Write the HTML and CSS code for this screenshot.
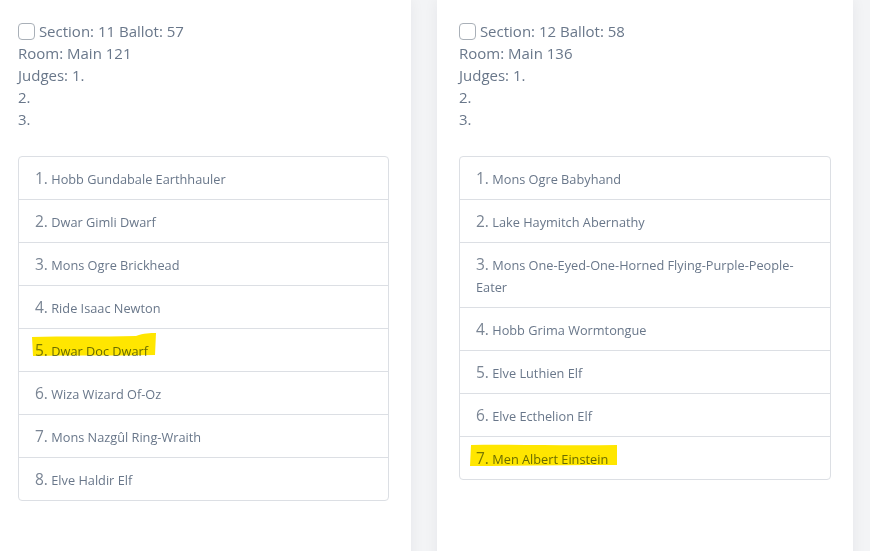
FILE: index.html
```html
<!DOCTYPE html>
<html>
<head>
<meta charset="utf-8">
<link rel="stylesheet" href="styles.css">
</head>
<body>
<div class="row">
  <div class="card">
    <div class="info">
      <div><span class="check"></span> Section: 11 Ballot: 57</div>
      <div>Room: Main 121</div>
      <div>Judges: 1.</div>
      <div>2.</div>
      <div>3.</div>
    </div>
    <ul class="list">
      <li><span class="num">1.</span> <span class="name">Hobb Gundabale Earthhauler</span></li>
      <li><span class="num">2.</span> <span class="name">Dwar Gimli Dwarf</span></li>
      <li><span class="num">3.</span> <span class="name">Mons Ogre Brickhead</span></li>
      <li><span class="num">4.</span> <span class="name">Ride Isaac Newton</span></li>
      <li class="marked"><span class="num">5.</span> <span class="name">Dwar Doc Dwarf</span><svg class="hl hl-a" width="124" height="24" viewBox="0 0 124 24"><path d="M0 4 C30 3 70 4 104 3 C112 0 118 0 124 0 L123 22 C80 23 40 22 1 23 Z" /></svg></li>
      <li><span class="num">6.</span> <span class="name">Wiza Wizard Of-Oz</span></li>
      <li><span class="num">7.</span> <span class="name">Mons Nazgûl Ring-Wraith</span></li>
      <li><span class="num">8.</span> <span class="name">Elve Haldir Elf</span></li>
    </ul>
  </div>
  <div class="card">
    <div class="info">
      <div><span class="check"></span> Section: 12 Ballot: 58</div>
      <div>Room: Main 136</div>
      <div>Judges: 1.</div>
      <div>2.</div>
      <div>3.</div>
    </div>
    <ul class="list">
      <li><span class="num">1.</span> <span class="name">Mons Ogre Babyhand</span></li>
      <li><span class="num">2.</span> <span class="name">Lake Haymitch Abernathy</span></li>
      <li><span class="num">3.</span> <span class="name">Mons One-Eyed-One-Horned Flying-Purple-People-Eater</span></li>
      <li><span class="num">4.</span> <span class="name">Hobb Grima Wormtongue</span></li>
      <li><span class="num">5.</span> <span class="name">Elve Luthien Elf</span></li>
      <li><span class="num">6.</span> <span class="name">Elve Ecthelion Elf</span></li>
      <li class="marked"><span class="num">7.</span> <span class="name">Men Albert Einstein</span><svg class="hl hl-b" width="148" height="23" viewBox="0 0 148 23"><path d="M1 1 C40 0 90 2 147 1 L147 21 C100 21 50 22 0 22 Z" /></svg></li>
    </ul>
  </div>
</div>
</body>
</html>
```

FILE: styles.css
```css
* { box-sizing: border-box; }
html, body {
  margin: 0;
  padding: 0;
  background: #f3f4f6;
  overflow: hidden;
}
body {
  font-family: "Open Sans", "Liberation Sans", sans-serif;
  color: #69778a;
  width: 870px;
  height: 551px;
}
.row {
  display: flex;
  gap: 26px;
  margin-left: -4px;
}
.card {
  flex: 0 0 415px;
  background: #fff;
  padding: 20px 22px 60px;
  height: 600px;
  box-shadow: 0 0 14px rgba(20, 30, 50, 0.06);
}
.card + .card { flex-basis: 416px; }
.info {
  font-size: 15px;
  line-height: 22px;
}
.check {
  display: inline-block;
  width: 17px;
  height: 17px;
  border: 1px solid #a9b0b8;
  border-radius: 4px;
  vertical-align: -3px;
  background: #fff;
}
.list {
  list-style: none;
  margin: 26px 0 0;
  padding: 0;
  border: 1px solid #dcdfe4;
  border-radius: 4px;
}
.list li {
  position: relative;
  padding: 11px 16px 9px;
  font-size: 12.75px;
  line-height: 22px;
  border-top: 1px solid #dcdfe4;
}
.list li:first-child { border-top: 0; }
.num {
  font-size: 15.5px;
  line-height: 1;
  color: #7a8594;
}
.name {
  font-size: 12.75px;
}
.hl {
  position: absolute;
  mix-blend-mode: multiply;
  fill: #ffe600;
  pointer-events: none;
}
.hl-a { left: 13px; top: 4px; }
.hl-b { left: 10px; top: 7px; }
```
